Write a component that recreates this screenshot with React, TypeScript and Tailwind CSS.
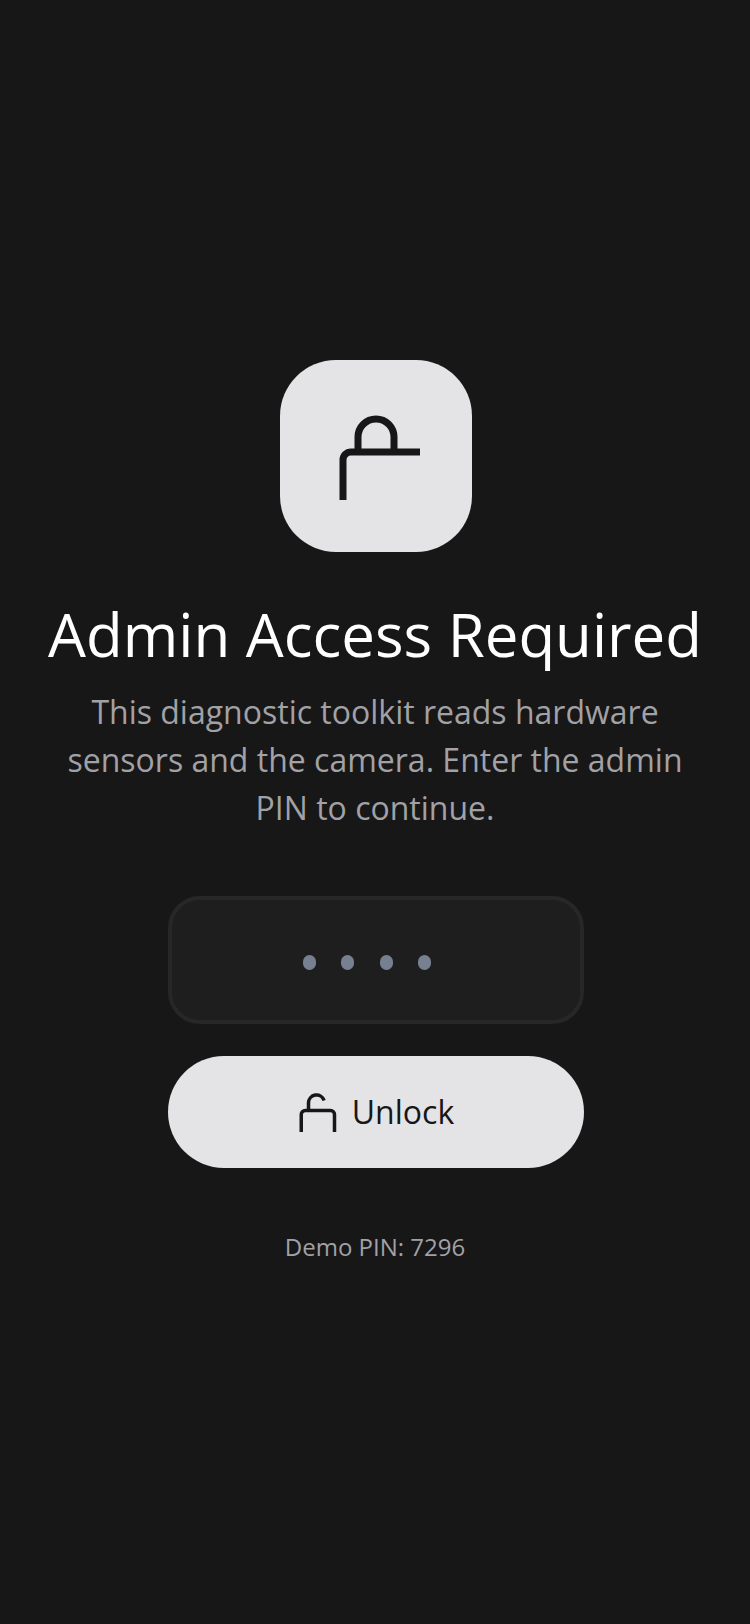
export default function App() {
  return (
    <div className="min-h-[1624px] w-[750px] bg-[#171717] flex flex-col items-center justify-center px-12 text-center font-['Open_Sans',sans-serif]">
      <div className="flex flex-col items-center w-full">
        <div className="ml-0.5 w-48 h-48 rounded-[56px] bg-[#e4e4e7] flex items-center justify-center mb-12">
          <svg width="96" height="96" viewBox="0 0 96 96" fill="none" stroke="#171717" strokeWidth="7">
            <path d="M15 92V52a8 8 0 0 1 8-8H92" />
            <path d="M30 44V29a18 18 0 0 1 36 0V44" />
          </svg>
        </div>
        <h1 className="text-[60px] leading-[68px] font-normal text-white whitespace-nowrap mb-5">Admin Access Required</h1>
        <p className="text-[32px] leading-[48px] text-[#a1a1a6] w-[654px] mb-16">This diagnostic toolkit reads hardware sensors and the camera. Enter the admin PIN to continue.</p>
        <div className="ml-0.5 w-[416px] h-[128px] rounded-[32px] bg-[#1e1e1e] border-4 border-[#272727] flex items-center justify-center gap-[25.5px] pr-[18px] pt-1 mb-8">
          <span className="w-[13px] h-[15px] rounded-full bg-[#778091]" />
          <span className="w-[13px] h-[15px] rounded-full bg-[#778091]" />
          <span className="w-[13px] h-[15px] rounded-full bg-[#778091]" />
          <span className="w-[13px] h-[15px] rounded-full bg-[#778091]" />
        </div>
        <button className="ml-0.5 w-[416px] h-[112px] rounded-[56px] bg-[#e4e4e7] flex items-center justify-center gap-4 mb-[63px]">
          <svg className="overflow-visible" width="38" height="40" viewBox="-1 0 38 40" fill="none" stroke="#171717" strokeWidth="3.5">
            <path d="M2.25 40V22.5a4 4 0 0 1 4-4H31.5a4 4 0 0 1 4 4V40" />
            <path d="M9.5 18.5V11a8 8 0 0 1 15.6-2.5" />
          </svg>
          <span className="text-[32px] leading-[48px] text-[#171717]">Unlock</span>
        </button>
        <p className="text-2xl leading-8 pb-px text-[#a1a1a6]">Demo PIN: 7296</p>
      </div>
    </div>
  );
}
